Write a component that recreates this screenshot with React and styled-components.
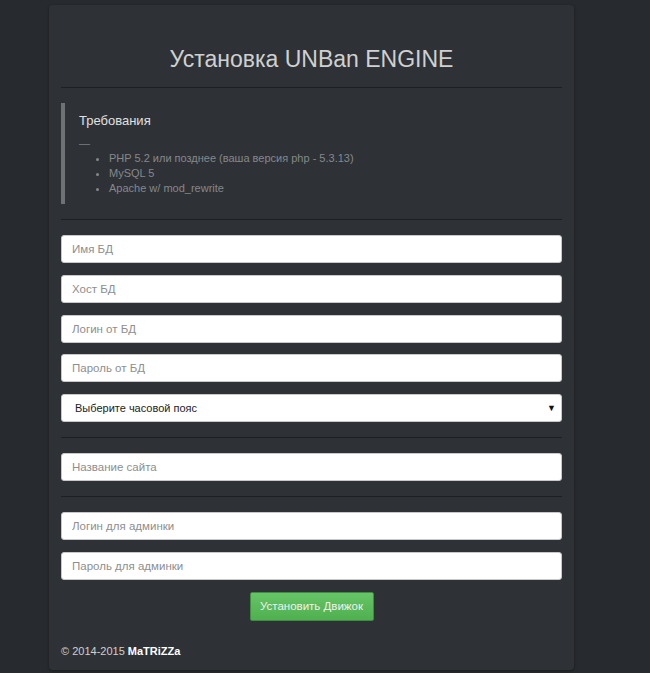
import styled, { createGlobalStyle } from 'styled-components';

const GlobalStyle = createGlobalStyle`
  html, body {
    margin: 0;
    padding: 0;
    background: #272a2e;
    font-family: "Liberation Sans", Arial, sans-serif;
  }
`;

const Page = styled.div`
  padding: 5px 0 5px 49px;
`;

const Panel = styled.div`
  width: 525px;
  box-sizing: border-box;
  background: #2e3236;
  border-radius: 4px;
  padding: 12px 12px 11px;
  box-shadow: 0 1px 3px rgba(0, 0, 0, 0.35);
`;

const Title = styled.h1`
  margin: 29px 0 14px;
  font-size: 23px;
  line-height: 26px;
  font-weight: 400;
  color: #d0d0d0;
  text-align: center;
`;

const Rule = styled.hr`
  margin: ${props => props.$gap || 15}px 0;
  border: 0;
  border-top: 1px solid #1d2023;
  height: 0;
`;

const Quote = styled.div`
  border-left: 4px solid #6f7275;
  padding: 8px 15px 8px 14px;
`;

const QuoteTitle = styled.div`
  font-size: 13px;
  line-height: 20px;
  color: #e0e0e0;
`;

const Dash = styled.div`
  margin-top: 5px;
  font-size: 11px;
  line-height: 15px;
  color: #7d8083;
`;

const List = styled.ul`
  margin: 0;
  padding-left: 30px;
  list-style: disc;
  font-size: 11px;
  line-height: 15px;
  color: #85888b;
`;

const Form = styled.form`
  display: flex;
  flex-direction: column;
`;

const Group = styled.div`
  display: flex;
  flex-direction: column;
  gap: 11.75px;
`;

const Input = styled.input`
  display: block;
  width: 100%;
  height: 28px;
  box-sizing: border-box;
  border: 1px solid #c8c8c8;
  border-radius: 3px;
  background: #fff;
  padding: 0 10px;
  font-family: "Liberation Sans", Arial, sans-serif;
  font-size: 11.5px;
  color: #333;
  outline: none;
  &::placeholder {
    color: #8e8e8e;
  }
`;

const SelectWrap = styled.div`
  position: relative;
`;

const Select = styled.select`
  display: block;
  width: 100%;
  height: 28px;
  box-sizing: border-box;
  border: 1px solid #c8c8c8;
  border-radius: 3px;
  background: #fff;
  padding: 0 13px;
  font-family: "Liberation Sans", Arial, sans-serif;
  font-size: 11px;
  color: #222;
  appearance: none;
  -webkit-appearance: none;
  outline: none;
`;

const Arrow = styled.span`
  position: absolute;
  right: 6px;
  top: 9px;
  font-size: 9px;
  line-height: 10px;
  color: #111;
  pointer-events: none;
`;

const ButtonRow = styled.div`
  display: flex;
  justify-content: center;
  margin-top: 12px;
`;

const Button = styled.button`
  width: 124px;
  height: 29px;
  border: 1px solid #3f8d3f;
  border-radius: 2px;
  background: linear-gradient(#66c566, #4fb04f);
  color: #f0f0f0;
  font-family: "Liberation Sans", Arial, sans-serif;
  font-size: 11.5px;
  padding: 0;
  cursor: pointer;
`;

const Footer = styled.div`
  margin-top: 22px;
  font-size: 11px;
  line-height: 16px;
  color: #cfcfcf;
`;

const Brand = styled.b`
  color: #fff;
`;

const App = () => {
  return (
    <Page>
      <GlobalStyle />
      <Panel>
        <Title>Установка UNBan ENGINE</Title>
        <Rule />
        <Quote>
          <QuoteTitle>Требования</QuoteTitle>
          <Dash>—</Dash>
          <List>
            <li>PHP 5.2 или позднее (ваша версия php - 5.3.13)</li>
            <li>MySQL 5</li>
            <li>Apache w/ mod_rewrite</li>
          </List>
        </Quote>
        <Rule />
        <Form onSubmit={e => e.preventDefault()}>
          <Group>
            <Input placeholder="Имя БД" />
            <Input placeholder="Хост БД" />
            <Input placeholder="Логин от БД" />
            <Input type="password" placeholder="Пароль от БД" />
            <SelectWrap>
              <Select defaultValue="">
                <option value="">Выберите часовой пояс</option>
              </Select>
              <Arrow>▼</Arrow>
            </SelectWrap>
          </Group>
          <Rule />
          <Input placeholder="Название сайта" />
          <Rule />
          <Group>
            <Input placeholder="Логин для админки" />
            <Input type="password" placeholder="Пароль для админки" />
          </Group>
          <ButtonRow>
            <Button type="submit">Установить Движок</Button>
          </ButtonRow>
        </Form>
        <Footer>
          © 2014-2015 <Brand>MaTRiZZa</Brand>
        </Footer>
      </Panel>
    </Page>
  );
};

export default App;
